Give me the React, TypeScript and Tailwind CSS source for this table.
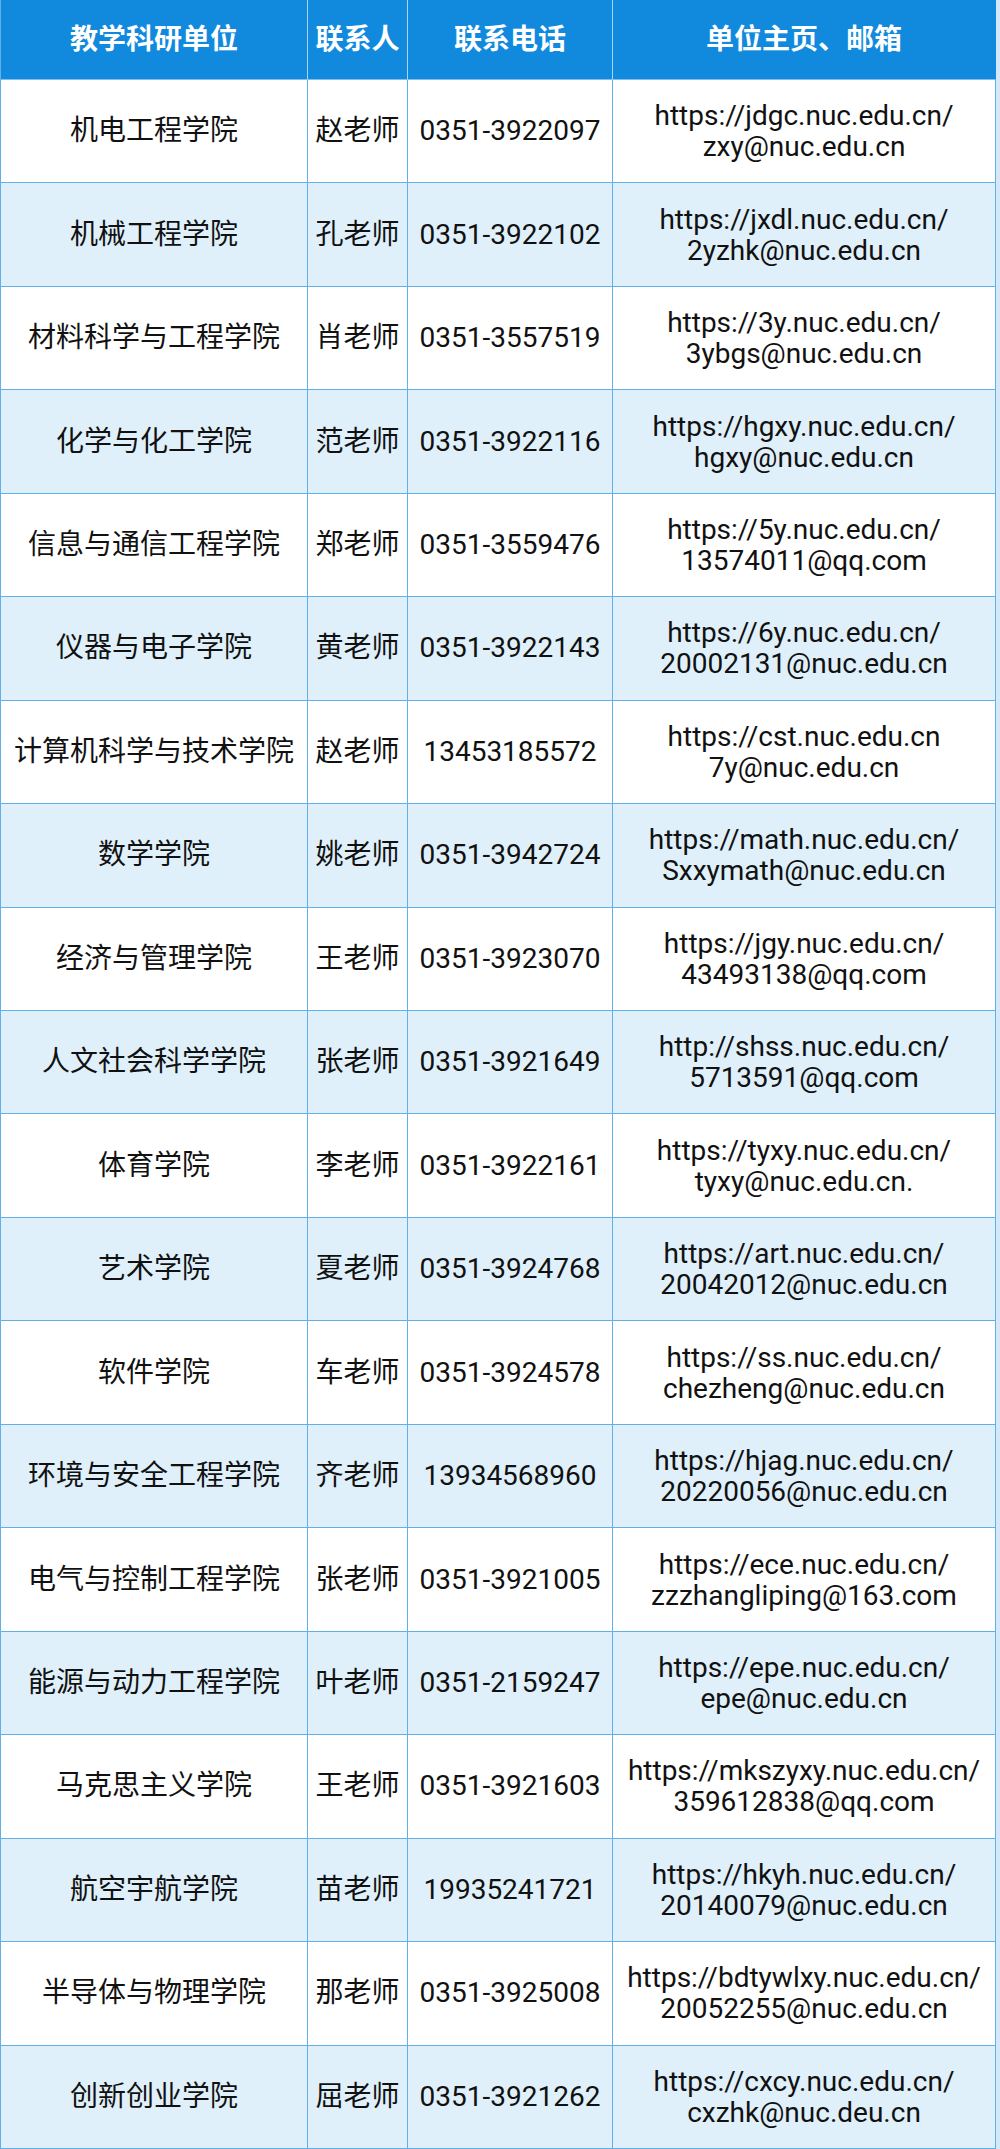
import React from "react";

type Row = [string, string, string, string, string];

const rows: Row[] = [
  ["机电工程学院", "赵老师", "0351-3922097", "https://jdgc.nuc.edu.cn/", "zxy@nuc.edu.cn"],
  ["机械工程学院", "孔老师", "0351-3922102", "https://jxdl.nuc.edu.cn/", "2yzhk@nuc.edu.cn"],
  ["材料科学与工程学院", "肖老师", "0351-3557519", "https://3y.nuc.edu.cn/", "3ybgs@nuc.edu.cn"],
  ["化学与化工学院", "范老师", "0351-3922116", "https://hgxy.nuc.edu.cn/", "hgxy@nuc.edu.cn"],
  ["信息与通信工程学院", "郑老师", "0351-3559476", "https://5y.nuc.edu.cn/", "13574011@qq.com"],
  ["仪器与电子学院", "黄老师", "0351-3922143", "https://6y.nuc.edu.cn/", "20002131@nuc.edu.cn"],
  ["计算机科学与技术学院", "赵老师", "13453185572", "https://cst.nuc.edu.cn", "7y@nuc.edu.cn"],
  ["数学学院", "姚老师", "0351-3942724", "https://math.nuc.edu.cn/", "Sxxymath@nuc.edu.cn"],
  ["经济与管理学院", "王老师", "0351-3923070", "https://jgy.nuc.edu.cn/", "43493138@qq.com"],
  ["人文社会科学学院", "张老师", "0351-3921649", "http://shss.nuc.edu.cn/", "5713591@qq.com"],
  ["体育学院", "李老师", "0351-3922161", "https://tyxy.nuc.edu.cn/", "tyxy@nuc.edu.cn."],
  ["艺术学院", "夏老师", "0351-3924768", "https://art.nuc.edu.cn/", "20042012@nuc.edu.cn"],
  ["软件学院", "车老师", "0351-3924578", "https://ss.nuc.edu.cn/", "chezheng@nuc.edu.cn"],
  ["环境与安全工程学院", "齐老师", "13934568960", "https://hjag.nuc.edu.cn/", "20220056@nuc.edu.cn"],
  ["电气与控制工程学院", "张老师", "0351-3921005", "https://ece.nuc.edu.cn/", "zzzhangliping@163.com"],
  ["能源与动力工程学院", "叶老师", "0351-2159247", "https://epe.nuc.edu.cn/", "epe@nuc.edu.cn"],
  ["马克思主义学院", "王老师", "0351-3921603", "https://mkszyxy.nuc.edu.cn/", "359612838@qq.com"],
  ["航空宇航学院", "苗老师", "19935241721", "https://hkyh.nuc.edu.cn/", "20140079@nuc.edu.cn"],
  ["半导体与物理学院", "那老师", "0351-3925008", "https://bdtywlxy.nuc.edu.cn/", "20052255@nuc.edu.cn"],
  ["创新创业学院", "屈老师", "0351-3921262", "https://cxcy.nuc.edu.cn/", "cxzhk@nuc.deu.cn"],
];

const headers = ["教学科研单位", "联系人", "联系电话", "单位主页、邮箱"];

export default function App() {
  return (
    <div
      className="w-[1000px] h-[2149px] bg-[#d3e9f9] text-[#111111]"
      style={{ fontFamily: "Roboto, 'Noto Sans CJK SC', sans-serif" }}
    >
      <div className="w-[996px] h-[2149px] border-l border-[#62b0ea] grid grid-cols-[307px_100px_205px_383px] grid-rows-[80px_repeat(20,minmax(0,1fr))]">
        {headers.map((h, i) => (
          <div
            key={h}
            className={`flex items-center justify-center bg-[#118ade] text-white font-bold text-[28px] border-b border-[#7cc0f0] ${
              i < 3 ? "border-r border-r-[#a9d6f5]" : "border-r border-r-[#118ade]"
            }`}
          >
            {h}
          </div>
        ))}
        {rows.map((r, ri) => {
          const bg = ri % 2 === 0 ? "bg-white" : "bg-[#dff0fb]";
          return (
            <React.Fragment key={ri}>
              <div className={`${bg} border-r border-b border-[#62b0ea] flex items-center justify-center text-[28px] whitespace-nowrap`}>
                {r[0]}
              </div>
              <div className={`${bg} border-r border-b border-[#62b0ea] flex items-center justify-center text-[28px] whitespace-nowrap`}>
                {r[1]}
              </div>
              <div className={`${bg} border-r border-b border-[#62b0ea] flex items-center justify-center text-[28px] whitespace-nowrap`}>
                {r[2]}
              </div>
              <div className={`${bg} border-r border-b border-[#62b0ea] flex flex-col items-center justify-center text-[28px] leading-[31px] whitespace-nowrap`}>
                <span>{r[3]}</span>
                <span>{r[4]}</span>
              </div>
            </React.Fragment>
          );
        })}
      </div>
    </div>
  );
}
